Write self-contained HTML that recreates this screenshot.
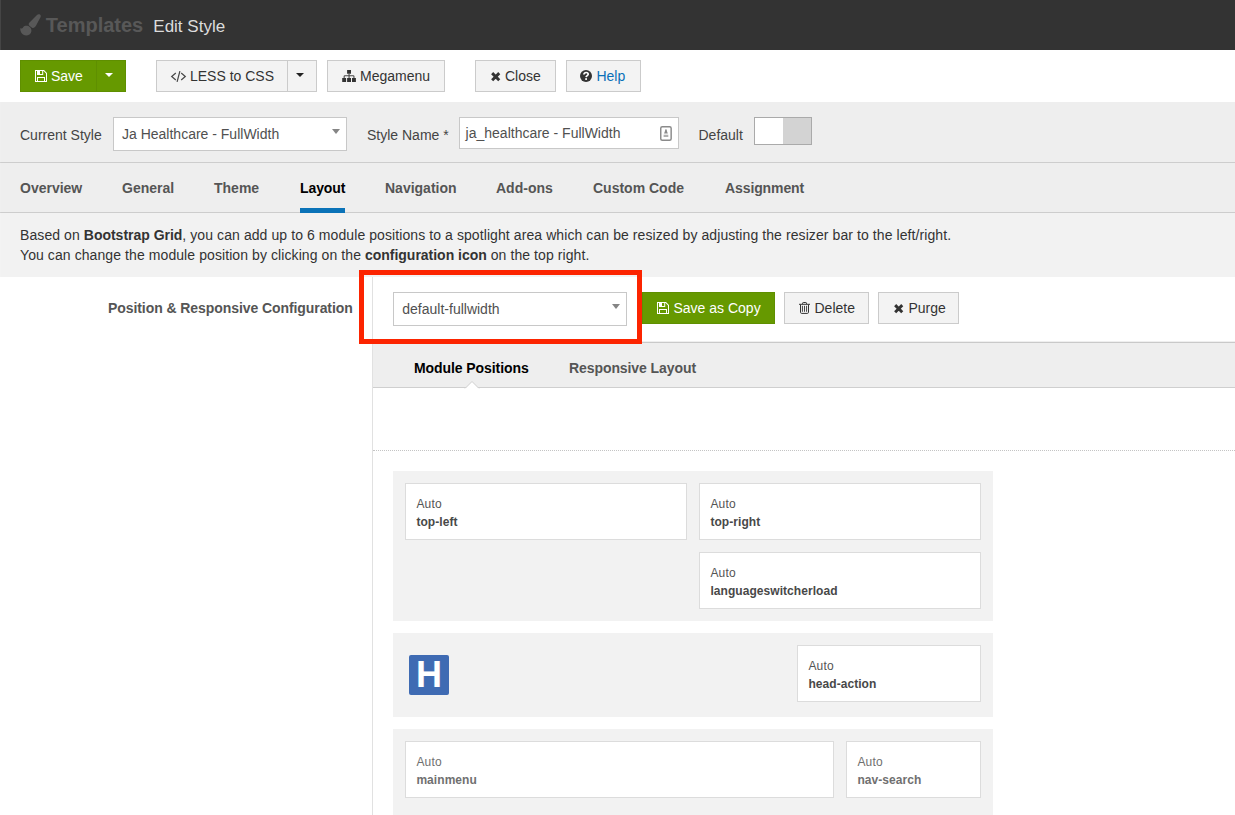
<!DOCTYPE html>
<html>
<head>
<meta charset="utf-8">
<title>Edit Style</title>
<style>
*{box-sizing:border-box;}
html,body{margin:0;padding:0;}
body{width:1235px;height:815px;overflow:hidden;background:#fff;font-family:"Liberation Sans",sans-serif;font-size:14px;color:#333;position:relative;}
.abs{position:absolute;}
svg{position:absolute;overflow:visible;}
#header{left:0;top:0;width:1235px;height:50px;background:#333333;}
#header .t1{left:45.8px;top:13px;font-size:20px;font-weight:bold;color:#585858;line-height:24px;}
#header .t2{left:153.3px;top:15px;font-size:17px;color:#dcdcdc;line-height:24px;}
#toolbar{left:0;top:50px;width:1235px;height:52px;background:#fff;}
.btn{position:absolute;height:32px;top:60px;border:1px solid #cbcbcb;background:#f3f3f3;color:#333;font-size:14px;line-height:30px;white-space:nowrap;}
.btn span{position:absolute;top:0;}
.btn.green{background:#669900;border-color:#5f8f00;color:#fff;}
.caret{position:absolute;width:0;height:0;border-left:4px solid transparent;border-right:4px solid transparent;border-top:4px solid #222;}
#stylebar{left:0;top:102px;width:1235px;height:61px;background:#eeeeee;border-bottom:1px solid #cdcdcd;}
#tabs{left:0;top:163px;width:1235px;height:50px;background:#eeeeee;border-bottom:1px solid #cdcdcd;}
#tabs span{position:absolute;top:17px;font-weight:bold;font-size:14px;color:#555;line-height:16px;}
#info{left:0;top:213px;width:1235px;height:64px;background:#f2f2f2;font-size:14px;line-height:20px;color:#333;letter-spacing:0.085px;}
#info b{letter-spacing:-0.02px;}
.lbl{position:absolute;font-size:14px;line-height:16px;color:#444;white-space:nowrap;}
.field{position:absolute;background:#fff;border:1px solid #c8c8c8;font-size:14px;color:#505050;white-space:nowrap;}
.tri{position:absolute;width:0;height:0;border-left:4px solid transparent;border-right:4px solid transparent;border-top:5.5px solid #858585;margin-left:-0.3px;}
#vline{left:372px;top:277px;width:1px;height:538px;background:#e1e1e1;}
#subtabs{left:373px;top:342px;width:862px;height:46px;background:#eeeeee;border-top:1px solid #c9c9c9;border-bottom:1px solid #cfcfcf;box-shadow:0 -1px 0 #efefef;}
#subtabs span{position:absolute;top:17px;font-weight:bold;font-size:14px;line-height:16px;white-space:nowrap;letter-spacing:-0.08px;}
#dotted{left:373px;top:450px;width:862px;height:0;border-top:1px dotted #c4c4c4;}
.blk{position:absolute;background:#f2f2f2;}
.pos{position:absolute;background:#fff;border:1px solid #dcdcdc;font-size:12px;line-height:18px;color:#555;padding:11px 0 0 10.4px;white-space:nowrap;letter-spacing:0.2px;}
.pos b{display:block;color:#484848;letter-spacing:0.06px;}
.pos.dim,.pos.dim b{color:#707070;}
#redbox{left:359px;top:270px;width:283px;height:74px;border:5px solid #fc2400;}
</style>
</head>
<body>
<!-- HEADER -->
<div id="header" class="abs">
  <svg style="left:19.5px;top:14px" width="21.5" height="22" viewBox="-0.5 0 21.5 22"><path d="M19 0.3C20.3 0.8 20.6 2 20 3.2L15.6 11.6C14.5 13.8 12.8 14.5 11.5 13.8L8.9 11.8C7.9 10.8 8 9.8 9 8.6L16.5 1C17.3 0.2 18.2 0 19 0.3Z" fill="#585858"/><path d="M-0.2 14C0.9 15 2 14.5 2.7 13.3C4 11.4 7.5 11.3 9.5 13.2C11.6 15.3 11.3 18.8 9 20.5C6.5 22.2 2.5 21.6 1 19C0 17.3 -0.3 15.5 -0.2 14Z" fill="#585858"/></svg>
  <div class="abs t1">Templates</div>
  <div class="abs t2">Edit Style</div>
</div>

<!-- TOOLBAR -->
<div id="toolbar" class="abs"></div>
<div class="btn green" style="left:20px;width:77px;"><span style="left:30px">Save</span></div>
<svg style="left:35px;top:70px" width="12" height="12" viewBox="0 0 12 12"><path fill="#fff" fill-rule="evenodd" d="M0 0H9L12 3V12H0Z M1 1V11H2V7H10V11H11V3.4L8.6 1H8.2V5H2V1Z M3 8V11H9V8Z M5 1.1H7.2V3.9H5Z"/></svg>
<div class="btn green" style="left:96px;width:30px;"></div>
<div class="caret" style="left:105px;top:73px;border-top-color:#fff"></div>

<div class="btn" style="left:156px;width:132px;"><span style="left:33px">LESS to CSS</span></div>
<svg style="left:171px;top:71px" width="15" height="11" viewBox="0 0 15 11"><path d="M4.8 1.9L0.7 5.4L4.8 9 M10.2 1.9L14.3 5.4L10.2 9 M8.9 0.2L6.1 10.8" fill="none" stroke="#4a4a4a" stroke-width="1.25"/></svg>
<div class="btn" style="left:287px;width:30px;"></div>
<div class="caret" style="left:296px;top:73px"></div>

<div class="btn" style="left:327px;width:118px;"><span style="left:32px">Megamenu</span></div>
<svg style="left:342px;top:70px" width="14" height="12" viewBox="0 0 14 12"><path fill="#333" d="M5.1 0h3.9v3.8H5.1z M0.2 8.1h3.9v3.8H0.2z M5.1 8.1h3.9v3.8H5.1z M10 8.1h3.9v3.8H10z"/><path d="M7.05 3.8V8.1 M2.15 8.1V6.6C2.15 6 2.5 5.75 3 5.75H11.1C11.6 5.75 11.95 6 11.95 6.6V8.1" fill="none" stroke="#4a4a4a" stroke-width="1.1"/></svg>

<div class="btn" style="left:475px;width:81px;"><span style="left:29px">Close</span></div>
<svg style="left:491px;top:72px" width="9.4" height="9.4" viewBox="0 0 9.4 9.4"><path d="M1.15 1.15L8.25 8.25 M8.25 1.15L1.15 8.25" stroke="#333" stroke-width="2.9" stroke-linejoin="round"/></svg>

<div class="btn" style="left:566px;width:75px;color:#0a6fb8"><span style="left:29.4px">Help</span></div>
<svg style="left:580.3px;top:69.9px" width="12" height="12" viewBox="0 0 12 12"><circle cx="6" cy="6" r="6" fill="#333"/><path d="M3.9 4.6C3.9 3.2 4.9 2.5 6.1 2.5C7.3 2.5 8.2 3.2 8.2 4.3C8.2 5.7 6.3 5.6 6.1 7.2" fill="none" stroke="#fff" stroke-width="1.7"/><rect x="5.2" y="8.2" width="1.8" height="1.7" fill="#fff"/></svg>

<!-- STYLE BAR -->
<div id="stylebar" class="abs"></div>
<div class="lbl" style="left:20px;top:127px">Current Style</div>
<div class="field" style="left:113px;top:117px;width:234px;height:34px;line-height:32px;padding-left:8px">Ja Healthcare - FullWidth</div>
<div class="tri" style="left:332px;top:129px"></div>
<div class="lbl" style="left:367px;top:127px">Style Name *</div>
<div class="field" style="left:459px;top:117px;width:220px;height:32px;line-height:30.6px;padding-left:5.6px">ja_healthcare - FullWidth</div>
<svg style="left:660px;top:125.8px" width="12" height="15" viewBox="0 0 12 15"><rect x="0.75" y="0.75" width="10.4" height="13.5" rx="1.5" fill="#fff" stroke="#8a8a8a" stroke-width="1.45"/><circle cx="5.95" cy="4.3" r="1" fill="#999"/><path d="M5.2 4.6H6.7L7.8 7.4H4.1Z" fill="#8a8a8a"/><rect x="3.6" y="8.7" width="4.7" height="2.3" fill="#b0b0b0"/></svg>
<div class="lbl" style="left:698.5px;top:127px">Default</div>
<div class="abs" style="left:754px;top:117px;width:58px;height:28px;border:1px solid #aaa;background:#d3d3d3"><div style="width:28px;height:26px;background:#fff"></div></div>

<!-- MAIN TABS -->
<div id="tabs" class="abs">
  <span style="left:20px">Overview</span>
  <span style="left:122px">General</span>
  <span style="left:214px">Theme</span>
  <span style="left:300px;color:#000;letter-spacing:-0.1px">Layout</span>
  <span style="left:385px">Navigation</span>
  <span style="left:496px">Add-ons</span>
  <span style="left:593px">Custom Code</span>
  <span style="left:725px;letter-spacing:-0.1px">Assignment</span>
  <div class="abs" style="left:300px;top:44.6px;width:45px;height:5.4px;background:#0b73b8"></div>
</div>

<!-- INFO -->
<div id="info" class="abs">
  <div class="abs" style="left:20px;top:12px;white-space:nowrap">Based on <b>Bootstrap Grid</b>, you can add up to 6 module positions to a spotlight area which can be resized by adjusting the resizer bar to the left/right.<br>You can change the module position by clicking on the <b>configuration icon</b> on the top right.</div>
</div>

<!-- CONFIG ROW -->
<div id="vline" class="abs"></div>
<div class="lbl" style="left:108px;top:299.8px;font-weight:bold;color:#555;letter-spacing:-0.075px">Position &amp; Responsive Configuration</div>
<div class="field" style="left:393px;top:292px;width:234px;height:34px;line-height:32px;padding-left:8.3px">default-fullwidth</div>
<div class="tri" style="left:612px;top:304px"></div>
<div class="btn green" style="left:642px;top:292px;width:133px;"><span style="left:30.5px">Save as Copy</span></div>
<svg style="left:657.1px;top:302px" width="12" height="12" viewBox="0 0 12 12"><path fill="#fff" fill-rule="evenodd" d="M0 0H9L12 3V12H0Z M1 1V11H2V7H10V11H11V3.4L8.6 1H8.2V5H2V1Z M3 8V11H9V8Z M5 1.1H7.2V3.9H5Z"/></svg>
<div class="btn" style="left:784px;top:292px;width:85px;"><span style="left:29.5px">Delete</span></div>
<svg style="left:799px;top:302px" width="11" height="12" viewBox="0 0 11 12"><path d="M0 2.3H11 M3.6 2.2V1.2C3.6 0.7 3.9 0.5 4.3 0.5H6.8C7.2 0.5 7.5 0.7 7.5 1.2V2.2 M1.5 2.5V10.3C1.5 11 2 11.4 2.6 11.4H8.4C9 11.4 9.5 11 9.5 10.3V2.5" fill="none" stroke="#333" stroke-width="1"/><path d="M3.45 4.2V9.4 M5.5 4.2V9.4 M7.55 4.2V9.4" fill="none" stroke="#333" stroke-width="0.9" stroke-linecap="round"/></svg>
<div class="btn" style="left:878px;top:292px;width:81px;"><span style="left:29.5px">Purge</span></div>
<svg style="left:893.5px;top:303.7px" width="9.4" height="9.4" viewBox="0 0 9.4 9.4"><path d="M1.15 1.15L8.25 8.25 M8.25 1.15L1.15 8.25" stroke="#333" stroke-width="2.9" stroke-linejoin="round"/></svg>

<!-- SUB TABS -->
<div id="subtabs" class="abs">
  <span style="left:41px;color:#000">Module Positions</span>
  <span style="left:196px;color:#555">Responsive Layout</span>
  <svg style="left:89px;top:37px" width="20" height="9" viewBox="0 0 20 9"><path d="M3 8.5L10 1.5L17 8.5" fill="#fff" stroke="#cfcfcf" stroke-width="1"/><rect x="3.5" y="8" width="13" height="1.5" fill="#fff"/></svg>
</div>
<div id="dotted" class="abs"></div>

<!-- MODULE BLOCKS -->
<div class="blk" style="left:393px;top:471px;width:600px;height:150px"></div>
<div class="pos" style="left:405px;top:483px;width:282px;height:57px">Auto<b>top-left</b></div>
<div class="pos" style="left:699px;top:483px;width:282px;height:57px">Auto<b>top-right</b></div>
<div class="pos" style="left:699px;top:552px;width:282px;height:57px">Auto<b>languageswitcherload</b></div>

<div class="blk" style="left:393px;top:633px;width:600px;height:84px"></div>
<div class="abs" style="left:409px;top:655px;width:40px;height:40px;background:#3f6bb3;border-radius:2px;color:#fff;font-weight:bold;font-size:36px;line-height:40px;text-align:center">H</div>
<div class="pos" style="left:797px;top:645px;width:184px;height:57px">Auto<b>head-action</b></div>

<div class="blk" style="left:393px;top:729px;width:600px;height:90px"></div>
<div class="pos dim" style="left:405px;top:741px;width:429px;height:57px">Auto<b>mainmenu</b></div>
<div class="pos dim" style="left:846px;top:741px;width:135px;height:57px">Auto<b>nav-search</b></div>

<div id="redbox" class="abs"></div>
<div class="abs" style="left:0;top:0;width:1px;height:815px;background:rgba(255,255,255,0.09)"></div>
</body>
</html>
